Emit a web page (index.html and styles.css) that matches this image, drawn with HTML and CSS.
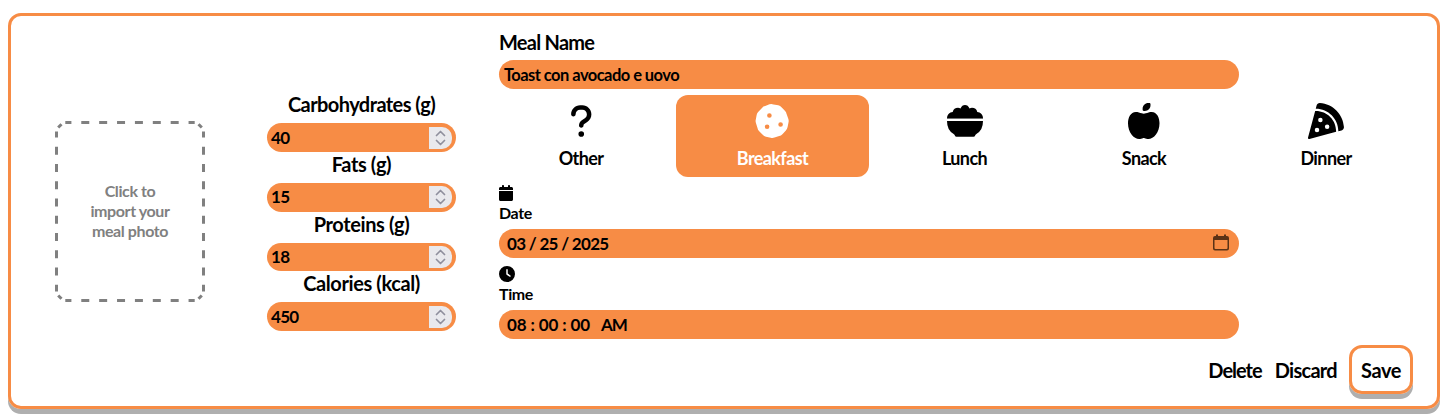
FILE: index.html
```html
<!DOCTYPE html>
<html lang="en">
<head>
<meta charset="utf-8">
<title>Meal</title>
<link rel="stylesheet" href="styles.css">
</head>
<body>
<form class="card">
  <div class="photo"><svg class="dashes" viewBox="0 0 150 181"><path class="across" d="M10.300 1.500H139.700M10.300 179.500H139.700"/><path class="down" d="M1.500 10.500V170.500M148.500 10.500V170.500"/><path d="M3.200 6.500L6.500 3.200M143.500 3.200L146.800 6.500M3.200 174.500L6.500 177.800M143.500 177.800L146.800 174.500"/></svg>Click to<br>import your<br>meal photo</div>
  <div class="nutrients">
    <div class="label carbs">Carbohydrates (g)</div>
    <div class="field number"><span>40</span><span class="spin"><svg viewBox="0 0 23 22"><path d="M7.5 8.5l4-4 4 4M7.5 13.5l4 4 4-4"/></svg></span></div>
    <div class="label fats">Fats (g)</div>
    <div class="field number"><span>15</span><span class="spin"><svg viewBox="0 0 23 22"><path d="M7.5 8.5l4-4 4 4M7.5 13.5l4 4 4-4"/></svg></span></div>
    <div class="label proteins">Proteins (g)</div>
    <div class="field number"><span>18</span><span class="spin"><svg viewBox="0 0 23 22"><path d="M7.5 8.5l4-4 4 4M7.5 13.5l4 4 4-4"/></svg></span></div>
    <div class="label calories">Calories (kcal)</div>
    <div class="field number"><span>450</span><span class="spin"><svg viewBox="0 0 23 22"><path d="M7.5 8.5l4-4 4 4M7.5 13.5l4 4 4-4"/></svg></span></div>
  </div>
  <div class="main">
    <div class="title">Meal Name</div>
    <div class="field name">Toast con avocado e uovo</div>
    <div class="types">
      <div class="type other"><svg width="22.5" height="36" viewBox="0 0 320 512"><path d="M80 160c0-35.3 28.7-64 64-64h32c35.3 0 64 28.7 64 64v3.6c0 21.8-11.1 42.1-29.4 53.8l-42.2 27.1c-25.2 16.2-40.4 44.1-40.4 74V320c0 17.7 14.3 32 32 32s32-14.3 32-32v-1.4c0-8.2 4.2-15.8 11-20.2l42.2-27.1c36.6-23.6 58.8-64.1 58.8-107.7V160c0-70.7-57.3-128-128-128H144C73.3 32 16 89.3 16 160c0 17.7 14.3 32 32 32s32-14.3 32-32zm80 320a40 40 0 1 0 0-80 40 40 0 1 0 0 80z"/></svg><span>Other</span></div>
      <div class="type breakfast"><svg width="36" height="36" viewBox="1 0 36 36"><path fill-rule="evenodd" d="M15.5 1.3q2-.5 4 .1l4.8.9q2 .5 3.2 2l3.4 3.4q1.400 1.300 1.700 3.200l1.600 4.600q.8 2 .3 4l-.9 4.600q-.4 2-1.700 3.300l-3.500 3.800q-1.300 1.500-3.200 1.800l-4.700 1.600q-2 .6-3.800.100l-4.700-1q-2-.4-3.300-1.900l-3.500-3.500q-1.500-1.300-1.700-3.300l-1.500-4.700q-.7-1.900-.200-3.800l.9-4.700q.4-2 1.900-3.300l3.400-3.600q1.300-1.500 3.200-1.800zM15.400 10.200a2.300 2.300 0 1 0 0 4.600 2.300 2.300 0 1 0 0-4.600zM13.100 21.400a2.300 2.300 0 1 0 0 4.600 2.300 2.300 0 1 0 0-4.600zM26.600 19.200a2.300 2.300 0 1 0 0 4.600 2.300 2.300 0 1 0 0-4.600z"/></svg><span>Breakfast</span></div>
      <div class="type lunch"><svg width="36" height="36" viewBox="0 0 36 36"><path d="M0 15.200v-2.200q.2-4 3.500-5.500 1-.5 2.200-.5 1.100-4.200 5.300-4.200 1.300 0 2.500.6Q15 0 18 0t4.500 3.400q1.200-.6 2.500-.6 4.200 0 5.300 4.200 1.200 0 2.200.5 3.300 1.500 3.500 5.500v.7H0zM0 16.100h36q0 9-6.300 12.700-1.500.9-1.700 2-.2 1-1.500 1h-17q-1.300 0-1.500-1-.2-1.100-1.700-2Q0 25.100 0 16.100z" transform="translate(0 2)"/><path class="gap" d="M0 15.800h36v2.100H0z"/></svg><span>Lunch</span></div>
      <div class="type snack"><svg width="31.5" height="36" viewBox="0 0 448 512"><path d="M224 112c-8.800 0-16-7.200-16-16V80c0-44.200 35.800-80 80-80h16c8.800 0 16 7.200 16 16V32c0 44.200-35.800 80-80 80H224zM0 288c0-76.300 35.700-160 112-160c27.300 0 59.700 10.300 82.700 19.300c18.800 7.300 39.900 7.300 58.700 0c22.900-8.900 55.400-19.300 82.700-19.300c76.300 0 112 83.700 112 160c0 128-80 224-160 224c-16.500 0-38.100-6.600-51.500-11.300c-8.100-2.800-16.900-2.800-25 0c-13.400 4.700-35 11.300-51.500 11.300C80 512 0 416 0 288z"/></svg><span>Snack</span></div>
      <div class="type dinner"><svg width="36" height="36" viewBox="0 0 512 512"><path d="M169.700.9c-22.800-1.600-41.900 14-47.500 34.700L110.400 80h1.600c176.700 0 320 143.300 320 320v1.600l44.400-11.800c20.800-5.500 36.300-24.700 34.700-47.500C498.500 159.500 352.500 13.500 169.700.9zM399.800 410.200c.1-3.400.2-6.800.2-10.200c0-159.100-128.900-288-288-288c-3.400 0-6.800.1-10.200.2L.5 491.900c-1.500 5.500.1 11.400 4.100 15.400s9.900 5.600 15.400 4.100L399.800 410.200zM176 208a32 32 0 1 1 0 64 32 32 0 1 1 0-64zm64 128a32 32 0 1 1 64 0 32 32 0 1 1-64 0zM96 384a32 32 0 1 1 64 0 32 32 0 1 1-64 0z"/></svg><span>Dinner</span></div>
    </div>
    <svg class="small-icon" width="14" height="16" viewBox="0 0 448 512"><path d="M96 32V64H48C21.500 64 0 85.500 0 112v48H448V112c0-26.500-21.500-48-48-48H352V32c0-17.700-14.300-32-32-32s-32 14.300-32 32V64H160V32c0-17.700-14.300-32-32-32S96 14.300 96 32zM448 192H0V464c0 26.500 21.500 48 48 48H400c26.500 0 48-21.500 48-48V192z"/></svg>
    <div class="caption date-caption">Date</div>
    <div class="field date"><span>03 / 25 / 2025</span><svg width="16" height="17" viewBox="0 0 16 17"><path fill-rule="evenodd" d="M3 2V.5h2V2h6V.5h2V2h1q2 0 2 2v10.500q0 2-2 2H2q-2 0-2-2V4q0-2 2-2zM1.500 6v8q0 1 1 1h11q1 0 1-1V6z"/></svg></div>
    <svg class="small-icon" width="16" height="16" viewBox="0 0 512 512"><path fill-rule="evenodd" d="M256 0a256 256 0 1 1 0 512A256 256 0 1 1 256 0zM232 120V256c0 8 4 15.500 10.700 20l96 64c11 7.400 25.900 4.400 33.300-6.700s4.400-25.900-6.700-33.300L280 243.200V120c0-13.300-10.700-24-24-24s-24 10.700-24 24z"/></svg>
    <div class="caption time-caption">Time</div>
    <div class="field time"><span>08 : 00 : 00</span><span class="meridiem">AM</span></div>
    <div class="actions"><span class="delete">Delete</span><span class="discard">Discard</span><span class="save">Save</span></div>
  </div>
</form>
</body>
</html>
```
FILE: styles.css
```css
* { box-sizing: border-box; }
html { height: 100%; overflow: hidden; }
body { height: 100%; margin: 0; padding: 13px 0 0 8px; background: #fff; color: #000; font: 700 16px/20px Lato, "Noto Sans", sans-serif; letter-spacing: -.4px; }
svg { display: block; fill: currentColor; flex: none; }
.card { display: flex; align-items: flex-start; width: 1432px; height: 396px; padding-left: 44px; border: 3px solid #f78c45; border-radius: 13px; box-shadow: 0 5px #afafaf; white-space: nowrap; }
.photo { position: relative; display: flex; align-items: center; justify-content: center; width: 150px; height: 181px; margin-top: 105px; padding-bottom: 1px; color: #808080; text-align: center; }
.dashes { position: absolute; inset: 0; width: 150px; height: 181px; fill: none; stroke: #808080; stroke-width: 3; }
.across { stroke-dasharray: 8 9.880; stroke-dashoffset: 1.900; }
.down { stroke-dasharray: 8 9.250; stroke-dashoffset: 2; }
.nutrients { width: 189px; margin: 76.300px 0 0 62px; }
.label { height: 31px; font-size: 20px; line-height: 25px; text-align: center; letter-spacing: -.4px; }
.carbs { letter-spacing: -.57px; }
.field { display: flex; align-items: center; height: 29px; padding-left: 5px; border-radius: 14.500px; background: #f78c45; }
.number { height: 28.700px; padding: 0 4px; justify-content: space-between; font-size: 17px; letter-spacing: -.7px; }
.spin { width: 23px; height: 22px; border-radius: 0 10px 10px 0; background: #e9e9ed; }
.spin svg { width: 23px; height: 22px; fill: none; stroke: #8f8f9d; stroke-width: 1.700; stroke-linecap: round; stroke-linejoin: round; }
.main { width: 914px; margin: 14px 0 0 43px; }
.title { height: 30px; font-size: 20px; line-height: 24px; letter-spacing: -.75px; }
.main > .field { width: 740px; font-size: 16.500px; }
.name { letter-spacing: -.55px; }
.types { display: grid; grid-template-columns: 177px 193px 190px 170px 194px; height: 82px; margin: 6px 0 8px; font-size: 18px; letter-spacing: -.6px; }
.type { display: flex; flex-direction: column; align-items: center; padding-top: 8px; }
.type span { margin-top: 9px; }
.other { padding-right: 13px; }
.breakfast { border-radius: 12px; background: #f78c45; color: #fff; }
.lunch { padding-left: 1px; }
.gap { fill: #fff; }
.caption { height: 28px; line-height: 24px; }
.main > .date { justify-content: space-between; padding: 0 10px 0 8px; margin-bottom: 8px; }
.main > .date, .main > .time { font-size: 17px; }
.date { letter-spacing: -.7px; }
.date svg { color: #5b3216; margin-bottom: 2px; }
.main > .time { padding-left: 8px; letter-spacing: -.12px; }
.meridiem { margin-left: 11px; letter-spacing: -1px; }
.actions { display: flex; align-items: center; justify-content: flex-end; height: 49px; margin-top: 6px; font-size: 20px; letter-spacing: -.4px; }
.delete { letter-spacing: -1px; }
.discard { margin: 0 12px 0 13px; letter-spacing: -.7px; }
.save { display: flex; align-items: center; justify-content: center; width: 64px; height: 49px; border: 3px solid #f78c45; border-radius: 13px; box-shadow: 0 5px #afafaf; }
```
